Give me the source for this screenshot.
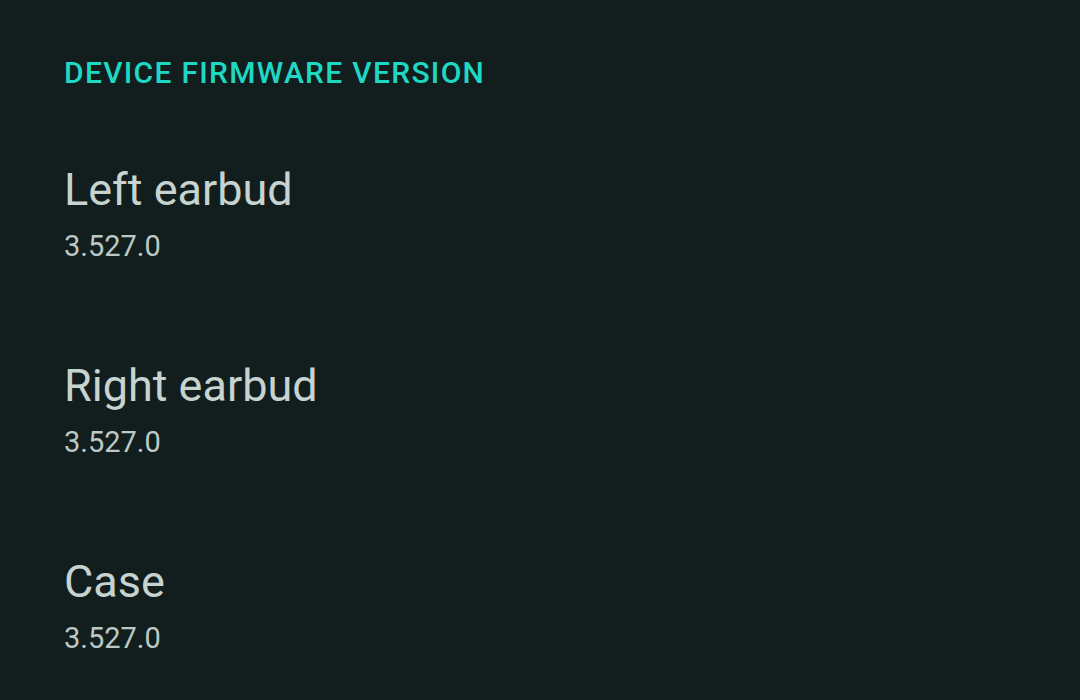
export default function App() {
  const items = ["Left earbud", "Right earbud", "Case"];
  return (
    <div className="w-[1080px] h-[700px] bg-[#121e1d] overflow-hidden pl-[64px]" style={{ fontFamily: "Roboto, 'Open Sans', sans-serif" }}>
      <div className="pt-[56px] h-[162px] text-[#1fd8c4] text-[30px] font-medium leading-[34px] tracking-[1.3px]">DEVICE FIRMWARE VERSION</div>
      {items.map((t) => (
        <div key={t} className="h-[196px]">
          <div className="text-[#c7d3d0] text-[45px] leading-[56px]">{t}</div>
          <div className="text-[#bcc8c5] text-[29px] leading-[40px] mt-[8px]">3.527.0</div>
        </div>
      ))}
    </div>
  );
}
